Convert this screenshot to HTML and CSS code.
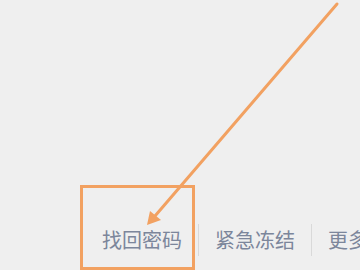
FILE: index.html
```html
<!DOCTYPE html>
<html lang="zh">
<head>
<meta charset="utf-8">
<link rel="stylesheet" href="styles.css">
</head>
<body>
<main class="page">
  <nav class="links">
    <a class="link">找回密码</a>
    <span class="divider"></span>
    <a class="link">紧急冻结</a>
    <span class="divider"></span>
    <a class="link">更多选项</a>
  </nav>
  <svg class="annotation" width="360" height="270" viewBox="0 0 360 270">
    <rect x="81.5" y="186.5" width="112" height="82" fill="none" stroke="#f2a161" stroke-width="3"/>
    <line x1="337" y1="4" x2="155" y2="216" stroke="#f2a161" stroke-width="3" stroke-linecap="round"/>
    <polygon points="147,225 150,211 161,220" fill="#f2a161"/>
  </svg>
</main>
</body>
</html>
```
FILE: styles.css
```css
html, body {
  margin: 0;
  padding: 0;
}
body {
  background: #efefef;
  font-family: "Noto Sans CJK SC", "Noto Sans", sans-serif;
}
.page {
  position: relative;
  width: 360px;
  height: 270px;
  overflow: hidden;
  display: flex;
  flex-direction: column;
  justify-content: flex-start;
  padding-top: 224px;
  box-sizing: border-box;
}
.links {
  display: flex;
  align-items: center;
  gap: 16px;
  padding-left: 102px;
  height: 32px;
  white-space: nowrap;
}
.link {
  font-size: 20px;
  line-height: 32px;
  color: #7c869b;
  flex: none;
}
.divider {
  width: 1px;
  height: 32px;
  background: #d9d9d9;
  flex: none;
}
.annotation {
  position: absolute;
  left: 0;
  top: 0;
}
```
